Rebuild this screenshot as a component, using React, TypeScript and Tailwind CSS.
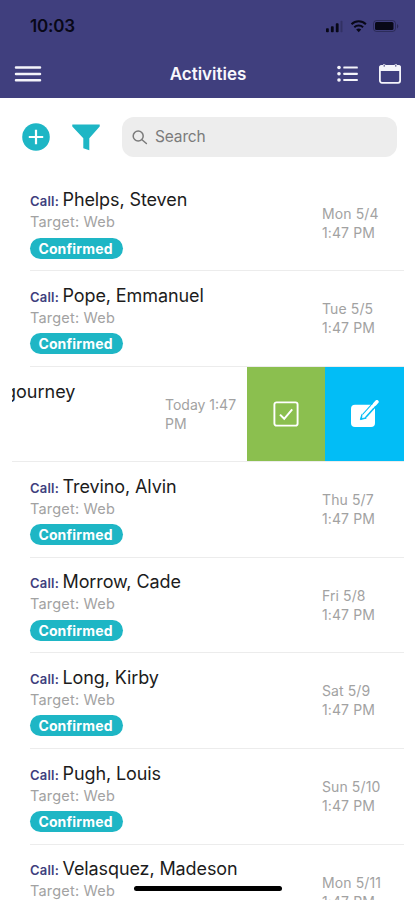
type Activity = { id: number; name: string; day: string; time: string };

const before: Activity[] = [
  { id: 1, name: 'Phelps, Steven', day: 'Mon 5/4', time: '1:47 PM' },
  { id: 2, name: 'Pope, Emmanuel', day: 'Tue 5/5', time: '1:47 PM' },
];

const after: Activity[] = [
  { id: 4, name: 'Trevino, Alvin', day: 'Thu 5/7', time: '1:47 PM' },
  { id: 5, name: 'Morrow, Cade', day: 'Fri 5/8', time: '1:47 PM' },
  { id: 6, name: 'Long, Kirby', day: 'Sat 5/9', time: '1:47 PM' },
  { id: 7, name: 'Pugh, Louis', day: 'Sun 5/10', time: '1:47 PM' },
  { id: 8, name: 'Velasquez, Madeson', day: 'Mon 5/11', time: '1:47 PM' },
];

function StatusIcons() {
  return (
    <svg width="76" height="16" viewBox="0 0 76 16" fill="#080817">
      <rect x="1" y="10.2" width="2.8" height="4" rx="0.8" />
      <rect x="5.9" y="8.2" width="2.8" height="6" rx="0.8" />
      <rect x="10.8" y="5.2" width="2.8" height="9" rx="0.8" />
      <rect x="15.5" y="2.7" width="2" height="11.5" rx="0.8" opacity="0.25" />
      <g fill="none" stroke="#080817" strokeWidth="2">
        <path d="M26.5 6.2a10.3 10.3 0 0 1 14.4 0" />
        <path d="M29.3 9.2a6.4 6.4 0 0 1 8.8 0" />
      </g>
      <path d="M33.7 14.2l-2.5-2.6a3.7 3.7 0 0 1 5 0z" />
      <rect x="48.5" y="2.5" width="22" height="11" rx="3" fill="none" stroke="#080817" opacity="0.35" />
      <rect x="50" y="4" width="18.5" height="8" rx="1.5" />
      <path d="M72 6v4.4c1.8-.8 1.8-3.6 0-4.4z" opacity="0.4" />
    </svg>
  );
}

function MenuIcon() {
  return (
    <svg width="28" height="18" viewBox="0 0 28 18" stroke="#f4f4fa" strokeWidth="2.5" strokeLinecap="round">
      <path d="M2 2.5h24M2 9h24M2 15.3h24" />
    </svg>
  );
}

function ListIcon() {
  return (
    <svg width="22" height="18" viewBox="0 0 22 18" fill="#f4f4fa">
      <circle cx="2" cy="2.5" r="1.8" />
      <circle cx="2" cy="8.8" r="1.8" />
      <circle cx="2" cy="15" r="1.8" />
      <rect x="6.3" y="1.4" width="14.5" height="2.2" rx="0.6" />
      <rect x="6.3" y="7.7" width="14.5" height="2.2" rx="0.6" />
      <rect x="6.3" y="13.9" width="14.5" height="2.2" rx="0.6" />
    </svg>
  );
}

function CalendarIcon() {
  return (
    <svg width="24" height="22" viewBox="0 0 24 22">
      <rect x="1.9" y="3" width="20.2" height="16.8" rx="2" fill="none" stroke="#f4f4fa" strokeWidth="1.8" />
      <path d="M1 4.5a2.2 2.2 0 0 1 2.2-2.2h2V1h2v1.3h9.6V1h2v1.3h2A2.2 2.2 0 0 1 23 4.5V8H1z" fill="#f4f4fa" />
      <path d="M6.2 1.5v2.2M17.8 1.5v2.2" stroke="#403f7e" strokeWidth="1" />
    </svg>
  );
}

function AddIcon() {
  return (
    <svg width="28" height="28" viewBox="0 0 28 28">
      <circle cx="14" cy="14" r="13.8" fill="#1eb6c5" />
      <path d="M14 6.8v14.4M6.8 14h14.4" stroke="#fff" strokeWidth="2.2" />
    </svg>
  );
}

function FunnelIcon() {
  return (
    <svg width="28" height="27" viewBox="0 0 28 27" fill="#1eb6c5">
      <path d="M.8.5h26.4a.6.6 0 0 1 .5 1v1L17.3 14.2V26.3l-6-2.1v-10L.3 2.5v-1A.6.6 0 0 1 .8.5z" />
    </svg>
  );
}

function SearchIcon() {
  return (
    <svg width="16" height="15" viewBox="0 0 16 15" fill="none" stroke="#7b7b7b" strokeWidth="1.5" strokeLinecap="round">
      <circle cx="6.2" cy="6" r="5" />
      <path d="M10 9.7l4.4 3.8" />
    </svg>
  );
}

function CheckboxIcon() {
  return (
    <svg width="26" height="26" viewBox="0 0 26 26" fill="none" stroke="#fff">
      <rect x="1.4" y="1.4" width="23.2" height="23.2" rx="2.2" strokeWidth="1.9" />
      <path d="M7 13.6l4.2 4.2 8-9.4" strokeWidth="2" />
    </svg>
  );
}

function EditIcon() {
  return (
    <svg width="30" height="28" viewBox="0 0 30 28">
      <rect x="1" y="4.8" width="24" height="22.2" rx="4" fill="#fff" />
      <path d="M25.6 3.4L14.4 15.8" stroke="#02bdf6" strokeWidth="5.6" />
      <path d="M10.4 19.6l1.4-5.2 4.4 3.8z" fill="#02bdf6" stroke="#02bdf6" strokeLinejoin="round" />
      <path d="M22.9 6.1L13 17" stroke="#fff" strokeWidth="3" />
      <path d="M12 18.2l.5-2 1.6 1.4z" fill="#fff" />
      <path d="M24.9 3.9l2-2.1" stroke="#fff" strokeWidth="3.6" strokeLinecap="round" />
      <path d="M22.3 6.8l3-3.3" stroke="#fff" strokeWidth="3" />
    </svg>
  );
}

function ActivityRow({ activity }: { activity: Activity }) {
  return (
    <div className="ml-[30px] mr-[11px] flex h-[95.6px] shrink-0 justify-between border-b border-[#ececec]">
      <div className="pt-[11.5px]">
        <div className="flex h-[25px] items-baseline whitespace-nowrap leading-[25px]">
          <span className="w-[32.5px] text-[13px] font-semibold tracking-[0.2px] text-[#403f7e]">Call:</span>
          <span className="text-[18px] tracking-[-0.1px] text-[#1c1c1c]">{activity.name}</span>
        </div>
        <div className="h-[20px] text-[14.5px] leading-[20px] tracking-[0.2px] text-[#a2a2a2]">Target: Web</div>
        <div className="-ml-[0.5px] mt-[5.5px] flex h-[21px] w-[93px] items-center justify-center rounded-full bg-[#1eb6c5] pr-px text-[14px] font-bold leading-[21px] tracking-[0.15px] text-white">
          Confirmed
        </div>
      </div>
      <div className="w-[82px] pt-[28px] text-[14px] leading-[19px] tracking-[0.1px] text-[#a2a2a2]">
        <div>{activity.day}</div>
        <div>{activity.time}</div>
      </div>
    </div>
  );
}

function SwipedRow() {
  return (
    <div className="ml-[12px] mr-[11px] flex h-[95.6px] shrink-0 border-b border-[#ececec]">
      <div className="flex w-[153px] overflow-hidden pt-[12px]">
        <span className="-ml-[7px] text-[18px] leading-[25px] text-[#1c1c1c]">gourney</span>
      </div>
      <div className="w-[82px] pt-[28px] text-[14px] leading-[19px] text-[#a2a2a2]">
        <div>Today 1:47</div>
        <div>PM</div>
      </div>
      <button className="flex w-[78px] items-center justify-center bg-[#8bbf4f]">
        <CheckboxIcon />
      </button>
      <button className="flex flex-1 items-center justify-center bg-[#02bdf6]">
        <EditIcon />
      </button>
    </div>
  );
}

export default function App() {
  return (
    <div className="relative flex h-[900px] w-[415px] flex-col overflow-hidden bg-white font-['Inter',sans-serif]">
      <header className="h-[97.5px] shrink-0 bg-[#403f7e]">
        <div className="flex h-[52px] items-center justify-between pl-[30px] pr-[14px]">
          <span className="pt-px text-[17px] font-semibold tracking-[-0.2px] text-[#080817]">10:03</span>
          <StatusIcons />
        </div>
        <div className="grid h-[44px] grid-cols-[1fr_auto_1fr] items-center pl-[14px] pr-[13px]">
          <MenuIcon />
          <h1 className="pt-[2px] text-[17px] font-semibold text-[#f8f8fc]">Activities</h1>
          <div className="flex items-center justify-end gap-[19px]">
            <ListIcon />
            <CalendarIcon />
          </div>
        </div>
      </header>

      <div className="flex h-[78px] shrink-0 items-center pl-[22px] pr-[18px] pt-px">
        <AddIcon />
        <div className="ml-[22px]">
          <FunnelIcon />
        </div>
        <div className="ml-[22px] flex h-[40px] flex-1 items-center gap-[7px] rounded-[12px] bg-[#ededed] pl-[10px] text-[15.5px] tracking-[-0.15px] text-[#7b7b7b]">
          <SearchIcon />
          <span>Search</span>
        </div>
      </div>

      <div className="flex flex-col">
        {before.map((a) => (
          <ActivityRow key={a.id} activity={a} />
        ))}
        <SwipedRow />
        {after.map((a) => (
          <ActivityRow key={a.id} activity={a} />
        ))}
      </div>

      <div className="absolute bottom-[9px] left-[134px] h-[5px] w-[148px] rounded-full bg-black" />
    </div>
  );
}
